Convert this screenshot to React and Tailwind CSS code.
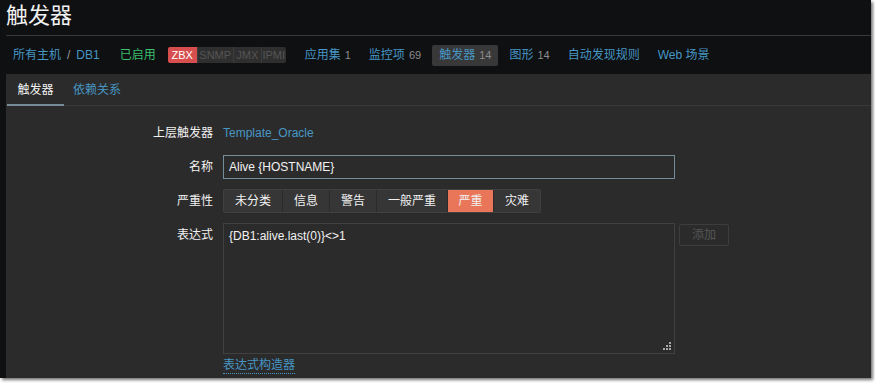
import React from "react"

const font = { fontFamily: '"Liberation Sans", Arial, "Noto Sans CJK SC", sans-serif' }

const badges = [
  { name: "ZBX", w: "w-[29px]", on: true },
  { name: "SNMP", w: "w-[36px]" },
  { name: "JMX", w: "w-[28px]" },
  { name: "IPMI", w: "w-[25px]" }
]

const navItems = [
  { label: "应用集", count: "1" },
  { label: "监控项", count: "69" },
  { label: "触发器", count: "14", active: true },
  { label: "图形", count: "14" },
  { label: "自动发现规则" },
  { label: "Web 场景" }
]

const severities = [
  { label: "未分类", w: "w-[58px]" },
  { label: "信息", w: "w-[47px]" },
  { label: "警告", w: "w-[47px]" },
  { label: "一般严重", w: "w-[71px]" },
  { label: "严重", w: "w-[46px]", on: true },
  { label: "灾难", w: "w-[47px]" }
]

function Row({ label, children, top = "items-center" }) {
  return (
    <div className={`flex ${top}`}>
      <div className="w-[207px] text-right text-[12px] text-[#f2f2f2] leading-[24px] shrink-0">{label}</div>
      <div className="ml-[10px] flex-1">{children}</div>
    </div>
  )
}

export default function App() {
  return (
    <div className="w-[875px] h-[383px] bg-white overflow-hidden" style={font}>
      <div className="w-[871px] h-[378px] bg-[#0e1012] shadow-[2px_2px_3px_rgba(0,0,0,0.55)] flex flex-col">
        {/* Header */}
        <div className="h-[35px] pl-[6px] pt-[3px] text-[22px] leading-[26px] text-[#f2f2f2]">触发器</div>
        <div className="ml-[6px] h-px bg-[#383838]" />

        {/* Nav */}
        <div className="h-[38px] flex items-center text-[12px]">
          <div className="ml-[13px] flex items-center">
            <span className="text-[#4796c4]">所有主机</span>
            <span className="mx-[6px] text-[#9a9a9a]">/</span>
            <span className="text-[#4796c4]">DB1</span>
          </div>
          <span className="ml-[20px] text-[#3cbf6e]">已启用</span>
          <div className="ml-[12px] flex h-[16px] rounded-[2px] overflow-hidden">
            {badges.map(b => (
              <div
                key={b.name}
                className={`${b.w} flex items-center justify-center text-[11px] ${
                  b.on
                    ? "bg-[#d64e4e] text-white"
                    : "bg-[#2f2f2f] text-[#555555] border-l border-[#3c3c3c]"
                }`}
              >
                {b.name}
              </div>
            ))}
          </div>
          <div className="ml-[12px] flex items-center gap-[4px]">
            {navItems.map(n => (
              <div
                key={n.label}
                className={`h-[21px] px-[7px] flex items-center rounded-[2px] ${n.active ? "bg-[#383838]" : ""}`}
              >
                <span className="text-[#4796c4]">{n.label}</span>
                {n.count && <span className="ml-[4px] text-[11px] text-[#8c8c8c]">{n.count}</span>}
              </div>
            ))}
          </div>
        </div>

        {/* Panel */}
        <div className="ml-[6px] flex-1 bg-[#2b2b2b] flex flex-col">
          <div className="h-[32px] flex border-b border-[#383838] text-[12px]">
            <div className="relative w-[57px] flex items-center justify-center text-[#f2f2f2] ml-[1px]">
              触发器
              <div className="absolute left-0 right-0 bottom-[-1px] h-[2px] bg-[#768d99]" />
            </div>
            <div className="ml-[9px] flex items-center text-[#4796c4]">依赖关系</div>
          </div>

          <div className="pt-[14px] flex flex-col gap-[10px]">
            <Row label="上层触发器">
              <span className="text-[12px] text-[#4796c4] leading-[24px]">Template_Oracle</span>
            </Row>
            <Row label="名称">
              <div className="w-[452px] h-[24px] border border-[#768d99] flex items-center px-[5px] text-[12px] text-[#f2f2f2]">
                Alive {"{HOSTNAME}"}
              </div>
            </Row>
            <Row label="严重性">
              <div className="flex h-[24px] border border-[#404040] rounded-[2px] w-fit overflow-hidden">
                {severities.map((s, i) => (
                  <div
                    key={s.label}
                    className={`${s.w} flex items-center justify-center text-[12px] text-[#f2f2f2] ${
                      i > 0 ? "border-l border-[#2b2b2b]" : ""
                    } ${s.on ? "bg-[#e97659]" : "bg-[#363636]"}`}
                  >
                    {s.label}
                  </div>
                ))}
              </div>
            </Row>
            <Row label="表达式" top="items-start">
              <div className="flex items-start">
                <div className="relative w-[452px] h-[131px] border border-[#404040] px-[5px] pt-[4px] text-[12px] text-[#f2f2f2] leading-[16px]">
                  {"{DB1:alive.last(0)}<>1"}
                  <svg className="absolute right-[3px] bottom-[3px]" width="8" height="8" viewBox="0 0 8 8">
                    <rect x="6" y="0" width="2" height="2" fill="#a8a8a8" />
                    <rect x="3" y="3" width="2" height="2" fill="#a8a8a8" />
                    <rect x="6" y="3" width="2" height="2" fill="#a8a8a8" />
                    <rect x="0" y="6" width="2" height="2" fill="#a8a8a8" />
                    <rect x="3" y="6" width="2" height="2" fill="#a8a8a8" />
                    <rect x="6" y="6" width="2" height="2" fill="#a8a8a8" />
                  </svg>
                </div>
                <div className="ml-[4px] mt-px w-[50px] h-[22px] border border-[#3d3d3d] rounded-[2px] flex items-center justify-center text-[12px] text-[#555555]">
                  添加
                </div>
              </div>
              <div className="mt-[3px] text-[12px] text-[#4796c4] leading-[16px] w-fit border-b border-dotted border-[#4796c4]">
                表达式构造器
              </div>
            </Row>
          </div>
        </div>
      </div>
    </div>
  )
}
